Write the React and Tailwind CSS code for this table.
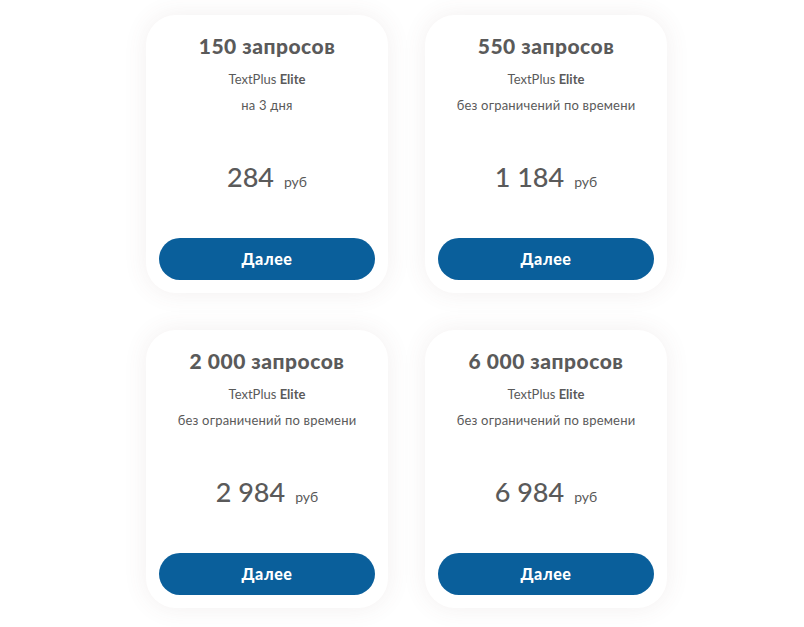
import React from 'react';

const plans = [
  { title: '150 запросов', term: 'на 3 дня', price: '284' },
  { title: '550 запросов', term: 'без ограничений по времени', price: '1 184' },
  { title: '2 000 запросов', term: 'без ограничений по времени', price: '2 984' },
  { title: '6 000 запросов', term: 'без ограничений по времени', price: '6 984' },
];

function PlanCard({ plan }) {
  return (
    <div className="w-[242px] h-[278px] bg-white rounded-[30px] shadow-[0_0_24px_rgba(110,80,80,0.09)] flex flex-col items-center px-[13px] pt-[18px] pb-[13px] text-[#5a5a5a]">
      {/* Header */}
      <h3 className="h-[26px] leading-[26px] text-[21px] font-black tracking-[0.5px]">{plan.title}</h3>
      <p className="mt-[7px] h-[26px] leading-[26px] text-[13px]">
        TextPlus <span className="font-bold">Elite</span>
      </p>
      <p className="h-[26px] leading-[26px] text-[13px] tracking-[0.2px]">{plan.term}</p>

      {/* Price */}
      <div className="mt-[41px] h-[36px] flex items-baseline gap-[10px]">
        <span className="text-[27px] leading-[36px] font-medium">{plan.price}</span>
        <span className="text-[14px]">руб</span>
      </div>

      {/* Action */}
      <button className="mt-auto w-full h-[42px] rounded-full bg-[#0a5f9b] text-white text-[16px] font-black tracking-[0.6px]">
        Далее
      </button>
    </div>
  );
}

export default function App() {
  return (
    <div className="min-h-[627px] bg-white pt-[15px] pl-[146px] font-['Lato','Noto_Sans',sans-serif]">
      <div className="grid grid-cols-[242px_242px] gap-[37px]">
        {plans.map((plan) => (
          <PlanCard key={plan.title} plan={plan} />
        ))}
      </div>
    </div>
  );
}
